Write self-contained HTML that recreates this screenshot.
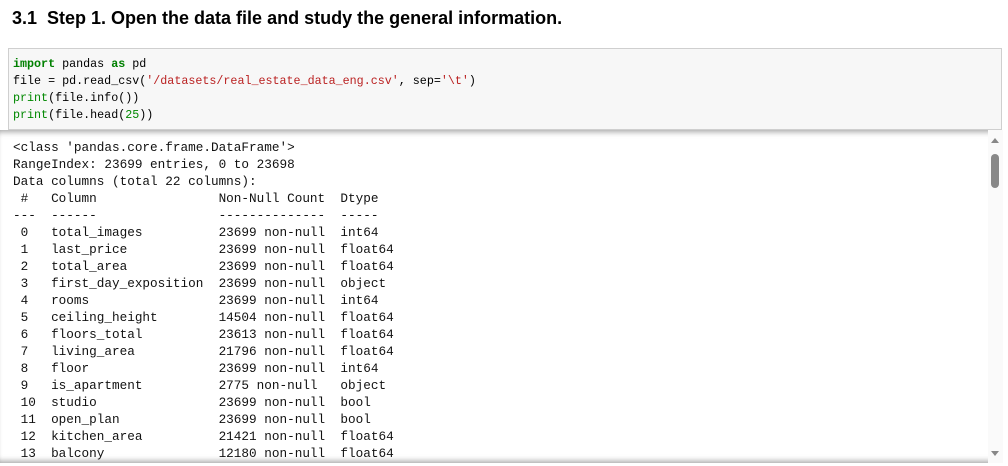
<!DOCTYPE html>
<html><head><style>
body{margin:0;width:1008px;height:466px;overflow:hidden;background:#fff;position:relative;font-family:"Liberation Sans",sans-serif}
h2{position:absolute;left:12px;top:8px;margin:0;font-size:18px;font-weight:bold;color:#000}
.code{position:absolute;left:8px;top:48px;width:992px;height:80px;background:#f7f7f7;border:1px solid #cfcfcf}
pre{margin:0;font-family:"Liberation Mono",monospace;font-size:11.7px;line-height:17px;color:#000}
.code pre{position:absolute;left:4px;top:7px}
.k{color:#008000;font-weight:bold}.s{color:#ba2121}.n{color:#080}
.out{position:absolute;left:0;top:130px;width:1003px;height:333px;overflow:hidden;box-shadow:inset 0 6px 6px -4px rgba(0,0,0,.35),inset 0 -6px 6px -4px rgba(0,0,0,.35)}
.out pre{position:absolute;left:13px;top:9px;font-size:12.7px;color:#111}
.sb{position:absolute;left:988px;top:130px;width:15px;height:333px;background:#fafafa}
.th{position:absolute;left:991px;top:154px;width:8px;height:34px;background:#888;border-radius:4px}
.up{position:absolute;left:991px;top:138px;width:0;height:0;border-left:4px solid transparent;border-right:4px solid transparent;border-bottom:5px solid #888}
.dn{position:absolute;left:991px;top:451px;width:0;height:0;border-left:4px solid transparent;border-right:4px solid transparent;border-top:5px solid #888}
</style></head><body>
<h2>3.1&nbsp; Step 1. Open the data file and study the general information.</h2>
<div class="code"><pre><span class="k">import</span> pandas <span class="k">as</span> pd
file = pd.read_csv(<span class="s">'/datasets/real_estate_data_eng.csv'</span>, sep=<span class="s">'\t'</span>)
<span class="n">print</span>(file.info())
<span class="n">print</span>(file.head(<span class="n">25</span>))</pre></div>
<div class="out"><pre>&lt;class 'pandas.core.frame.DataFrame'&gt;
RangeIndex: 23699 entries, 0 to 23698
Data columns (total 22 columns):
 #   Column                Non-Null Count  Dtype  
---  ------                --------------  -----  
 0   total_images          23699 non-null  int64  
 1   last_price            23699 non-null  float64
 2   total_area            23699 non-null  float64
 3   first_day_exposition  23699 non-null  object 
 4   rooms                 23699 non-null  int64  
 5   ceiling_height        14504 non-null  float64
 6   floors_total          23613 non-null  float64
 7   living_area           21796 non-null  float64
 8   floor                 23699 non-null  int64  
 9   is_apartment          2775 non-null   object 
 10  studio                23699 non-null  bool   
 11  open_plan             23699 non-null  bool   
 12  kitchen_area          21421 non-null  float64
 13  balcony               12180 non-null  float64
 14  locality_name         23650 non-null  object </pre></div>
<div class="sb"></div><div class="th"></div><div class="up"></div><div class="dn"></div>
</body></html>
